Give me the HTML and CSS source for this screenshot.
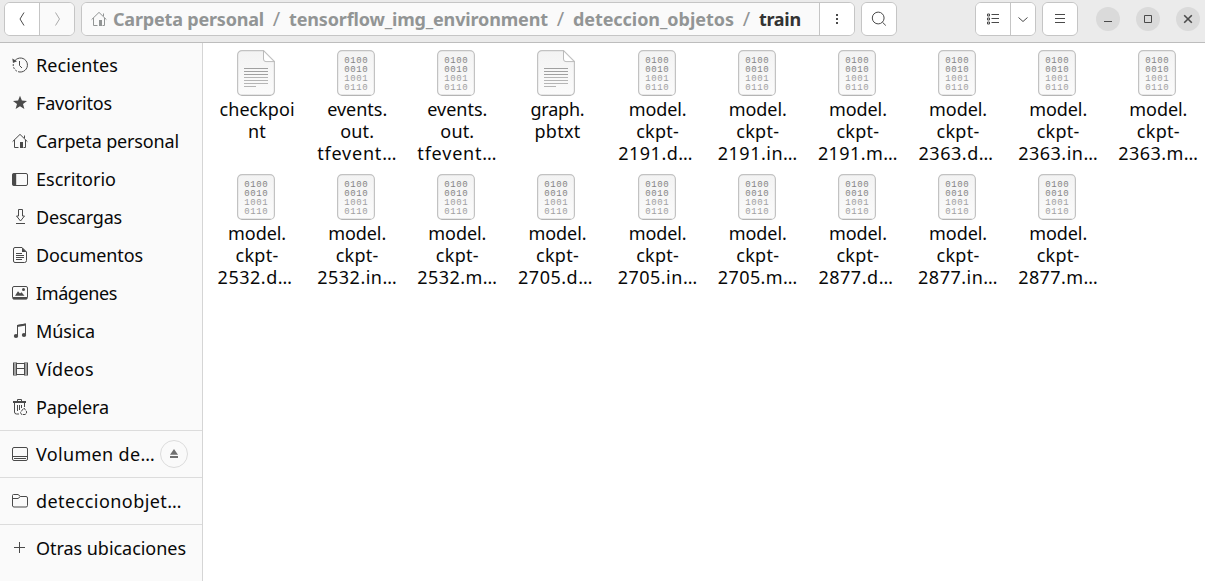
FILE: index.html
```html
<!DOCTYPE html>
<html lang="es">
<head>
<meta charset="utf-8">
<title>train</title>
<link rel="stylesheet" href="styles.css">
</head>
<body>
<svg class="defs" width="0" height="0">
  <defs>
    <linearGradient id="paper" x1="0" y1="0" x2="0" y2="1"><stop offset="0" stop-color="#f3f3f3"/><stop offset="1" stop-color="#fbfbfb"/></linearGradient>
    <symbol id="home" viewBox="0 0 16 16"><path d="M.6 8.6 8 1.4l7.4 7.2M2.5 7v7.5h4M13.5 7v7.5h-2M12.5 5V2.5"/><path class="solid" d="M8 9h3v6H8z"/></symbol>
    <symbol id="binary" viewBox="0 0 38 46">
      <rect x=".6" y=".6" width="36.8" height="44.8" rx="4.5" fill="url(#paper)" stroke="#c2c2c2" stroke-width="1.2"/>
      <path d="M4.5 45.4h29" stroke="#b2b2b2"/>
      <g class="bits"><text x="7.300" y="13">0100</text><text x="7.300" y="22">0010</text><text class="pale" x="7.300" y="31">1001</text><text class="pale" x="7.300" y="40">0110</text></g>
    </symbol>
    <symbol id="text" viewBox="0 0 38 46">
      <path d="M5 .6h21.5l10.9 11V41a4.4 4.4 0 0 1-4.4 4.4H5A4.4 4.4 0 0 1 .6 41V5A4.4 4.4 0 0 1 5 .6z" fill="url(#paper)" stroke="#c2c2c2" stroke-width="1.2"/>
      <path d="M4.5 45.4h29" stroke="#b2b2b2"/>
      <path d="M26.5.8V9a2.5 2.5 0 0 0 2.5 2.6h8.2z" fill="#fff" stroke="#bbb"/>
      <path d="M7 18.5h24M7 21.5h24M7 24.5h24" stroke="#a0a0a0"/><path d="M7 27.5h24M7 30.5h24M7 33.5h24M7 36.5h12" stroke="#b5b5b5"/>
    </symbol>
  </defs>
</svg>
<header class="bar">
  <div class="group nav">
    <button class="btn back"><svg class="ic" viewBox="0 0 16 16"><path d="M10 1.500 6 8l4 6.500"/></svg></button>
    <button class="btn fwd off"><svg class="ic" viewBox="0 0 16 16"><path d="M6.500 1.500 10.500 8l-4 6.500"/></svg></button>
  </div>
  <div class="group path">
    <div class="crumbs">
      <svg class="ic"><use href="#home"/></svg>
      <span data-w="151">Carpeta personal</span><i>/</i><span data-w="259">tensorflow_img_environment</span><i>/</i><span data-w="161">deteccion_objetos</span><i>/</i><span class="here" data-w="42">train</span>
    </div>
    <button class="btn more"><svg class="ic" viewBox="0 0 16 16"><path class="solid" d="M7 3h2v2H7zM7 7h2v2H7zM7 11h2v2H7z"/></svg></button>
  </div>
  <div class="group"><button class="btn sq"><svg class="ic" viewBox="0 0 16 16"><circle cx="7.200" cy="7" r="5.900"/><path d="m11.500 11.300 3.300 3.200"/></svg></button></div>
  <div class="group view">
    <button class="btn list"><svg class="ic" viewBox="0 0 16 16"><path d="M2.500 3h2v2h-2zM2.500 7h2v2h-2zM2.500 11h2v2h-2z"/><path d="M6.500 3.500H14M6.500 7.500H14M6.500 11.500H14"/></svg></button>
    <button class="btn drop"><svg class="ic" viewBox="0 0 16 16"><path d="m3.500 6.500 4.500 4 4.500-4"/></svg></button>
  </div>
  <div class="group"><button class="btn sq"><svg class="ic" viewBox="0 0 16 16"><path d="M3 3.500h10M3 7.500h10M3 11.500h10"/></svg></button></div>
  <div class="wins">
    <button class="win"><svg class="ic" viewBox="0 0 16 16"><path d="M4 10.500h8"/></svg></button>
    <button class="win"><svg class="ic" viewBox="0 0 16 16"><path d="M4.500 4.500h7v7h-7z"/></svg></button>
    <button class="win"><svg class="ic thick" viewBox="0 0 16 16"><path d="m4.200 4.200 7.600 7.600M11.800 4.200l-7.600 7.600"/></svg></button>
  </div>
</header>
<main class="body">
  <nav class="side">
    <div class="places">
      <a><svg class="ic" viewBox="0 0 16 16"><path d="M3 3.600A7 7 0 1 1 8 15"/><path d="M8 15A7 7 0 0 1 1.300 7" stroke-dasharray="2 1.200"/><path d="M7.500 4v4.500L10 11"/><path class="solid" d="M.3 1.500 1 6l4-1.800z"/></svg><span data-w="82">Recientes</span></a>
      <a><svg class="ic" viewBox="0 0 16 16"><path class="solid" d="m8 .8 1.900 4.800 5.100.3-4 3.200 1.400 5L8 11.300l-4.400 2.800 1.400-5-4-3.200 5.100-.3z"/></svg><span data-w="76">Favoritos</span></a>
      <a><svg class="ic"><use href="#home"/></svg><span data-w="143">Carpeta personal</span></a>
      <a><svg class="ic" viewBox="0 0 16 16"><rect x=".5" y="2.500" width="15" height="12" rx="1.500"/><path class="solid" d="M.5 2.500h3.700v12H.5z"/></svg><span data-w="80">Escritorio</span></a>
      <a><svg class="ic" viewBox="0 0 16 16"><path d="M6.500.5h4V7h2l-4 5-4-5h2zM4 14.500h9"/></svg><span data-w="86">Descargas</span></a>
      <a><svg class="ic" viewBox="0 0 16 16"><path d="M3 .5h7l4.500 4.500v8.500a2 2 0 0 1-2 2H3a1.500 1.500 0 0 1-1.500-1.500V2A1.500 1.500 0 0 1 3 .5zM4 6.500h6M4 8.500h8M4 10.500h8M4 12.500h6"/><path class="solid" d="M10 .5V5h4.500z"/></svg><span data-w="107">Documentos</span></a>
      <a><svg class="ic" viewBox="0 0 16 16"><rect x=".5" y="1.500" width="15" height="12.500" rx="1.500"/><path class="solid" d="M1 12h14v2.300H1zM3 10.800l3-4.600 2 2.400 1.500-1.400 3 3.600z"/><circle class="solid" cx="11.500" cy="4.500" r="1.500"/></svg><span data-w="81">Imágenes</span></a>
      <a><svg class="ic" viewBox="0 0 16 16"><path d="M5.500 12.500v-10l8-1.500v10.500"/><path class="solid" d="m5 2 9-1.500v2L5 4z"/><ellipse class="solid" cx="4" cy="13" rx="2.200" ry="1.900"/><ellipse class="solid" cx="12" cy="12" rx="2.200" ry="1.900"/></svg><span data-w="59">Música</span></a>
      <a><svg class="ic" viewBox="0 0 16 16"><path d="M4.500 1.500v13M12.500 1.500v13M4.500 2.500h8M4.500 7.500h8M4.500 13.500h8M1.500 1.500v13M15.500 1.500v13"/><path d="M3 1.500v13M14 1.500v13" stroke-width="2" stroke-dasharray="1 1"/></svg><span data-w="58">Vídeos</span></a>
      <a><svg class="ic" viewBox="0 0 16 16"><path d="M5.500 2V.5h4V2M2.500 4v9a2 2 0 0 0 2 2H7M12.500 4v4M5.500 6v6M7.500 6v5M9.500 6v3"/><path class="solid" d="M1 2h13v2H1z"/><path d="M9.500 12 12 9l2.800 4-1.300 2.500H9.500L8.500 13.500z" stroke-dasharray="3 .8"/></svg><span data-w="73">Papelera</span></a>
    </div>
    <div class="places">
      <a><svg class="ic" viewBox="0 0 16 16"><rect x=".5" y="1.500" width="15" height="13" rx="1.500"/><path d="M1 10.500h14M2 12.500h12"/></svg><span data-w="119">Volumen de…</span><b class="eject"><svg class="ic" viewBox="0 0 16 16"><path class="solid" d="m8 3 4 5.800H4zM4 10h8v2H4z"/></svg></b></a>
    </div>
    <div class="places">
      <a><svg class="ic" viewBox="0 0 16 16"><path d="M.5 13V2.500a1 1 0 0 1 1-1H6l2.500 2h5.500a1.500 1.500 0 0 1 1.500 1.500v7.500a1.500 1.500 0 0 1-1.500 1.500H2A1.500 1.500 0 0 1 .5 12.500zM.5 5.500H6l2.500-2"/></svg><span data-w="146">deteccionobjet…</span></a>
    </div>
    <div class="places">
      <a><svg class="ic" viewBox="0 0 16 16"><path d="M7.500 2v11M2 7.500h11"/></svg><span data-w="150">Otras ubicaciones</span></a>
    </div>
  </nav>
  <section class="files" id="files"></section>
</main>
<script src="app.js"></script>
</body>
</html>
```
FILE: styles.css
```css
* { box-sizing: border-box; }
body { margin: 0; width: 1205px; height: 581px; overflow: hidden; background: #fff; color: #080808; font: 18px/22px "Noto Sans", "Open Sans", sans-serif; }
.defs { position: absolute; }
[data-w] { white-space: pre; flex: none; }
.ic { width: 16px; height: 16px; flex: none; display: block; fill: none; color: #4a4a4a; stroke: currentColor; stroke-width: 1; overflow: visible; }
.solid { fill: currentColor; stroke: none; }
.thick { stroke-width: 1.6; }
.bar { height: 43px; padding: 2px 5px 0 4px; display: flex; align-items: flex-start; background: #ebebeb; border-bottom: 1px solid #bdbdbd; }
.group { display: flex; height: 34px; border: 1px solid #c5c5c5; border-radius: 6px; background: #fff; overflow: hidden; margin-right: 6px; flex: none; }
.btn { border: 0; padding: 0; background: #fff; display: flex; align-items: center; justify-content: center; }
.btn + .btn, .more { border-left: 1px solid #c5c5c5; }
.nav { width: 71px; }
.back { width: 34px; }
.fwd { width: 35px; }
.off { background: #fafafa; }
.off .ic { color: #aaa; }
.path { width: 774px; }
.crumbs { flex: 1; display: flex; align-items: center; background: #fafafa; color: #929595; font-weight: 700; padding-left: 9px; }
.crumbs .ic { color: #929595; margin-right: 6px; }
.crumbs i { font-style: normal; font-weight: 400; width: 25px; text-align: center; font-size: 20px; }
.crumbs .here { color: #333; }
.more { width: 35px; }
.sq { width: 34px; }
.view { margin-left: 72px; width: 61px; }
.list { width: 34px; }
.drop { width: 25px; }
.wins { display: flex; gap: 16px; margin: 5px 0 0 12px; }
.win { width: 24px; height: 24px; padding: 4px; border: 0; border-radius: 50%; background: #dadada; }
.body { display: flex; height: 538px; }
.side { width: 203px; flex: none; background: #fafafa; border-right: 1px solid #d5d5d5; padding-top: 3px; }
.places a { display: flex; align-items: center; height: 38px; padding-left: 12px; gap: 8px; }
.places + .places { border-top: 1px solid #dcdcdc; margin-top: 4px; padding-top: 4px; }
.eject { width: 28px; height: 28px; border: 1px solid #dcdcdc; border-radius: 50%; margin-left: -3px; padding: 5px; flex: none; }
.eject .ic { color: #707070; }
.files { display: grid; grid-template-columns: repeat(10, 100.15px); grid-auto-rows: 124px; align-content: start; padding: 7px 0 0 3px; }
.file { display: flex; flex-direction: column; align-items: center; }
.file svg { width: 38px; height: 46px; margin-bottom: 2px; }
.file span { margin-left: 2px; }
.file .tight { margin-right: 4px; }
.bits { font: 9px "Liberation Mono", monospace; letter-spacing: .6px; fill: #858585; }
.bits .pale { fill: #a0a0a0; }
```
FILE: app.js
```js
const widths = { "checkpoi": 75, "nt": 18, "events.": 60, "out.": 34, "tfevent…": 80, "graph.": 54, "pbtxt": 46, "model.": 58, "ckpt-": 43 };
const files = [
  ["text", "checkpoi", "nt"],
  ["binary", "events.", "out.", "tfevent…"],
  ["binary", "events.", "out.", "tfevent…"],
  ["text", "graph.", "pbtxt"]
];
for (const step of ["2191", "2363", "2532", "2705", "2877"])
  for (const kind of ["d", "in", "m"])
    files.push(["binary", "model.", "ckpt-", step + "." + kind + "…"]);

document.getElementById("files").innerHTML = files.map(([icon, ...lines]) =>
  `<div class="file"><svg><use href="#${icon}"/></svg>` + lines.map(t => {
    const data = t.endsWith(".d…");
    return `<span class="${data ? "tight" : "line"}" data-w="${widths[t] || (data ? 75 : 80)}">${t}</span>`;
  }).join("") + "</div>").join("");

for (const el of document.querySelectorAll("[data-w]")) {
  const spacing = (el.dataset.w - el.getBoundingClientRect().width) / el.textContent.length;
  el.style.letterSpacing = spacing + "px";
}
```
